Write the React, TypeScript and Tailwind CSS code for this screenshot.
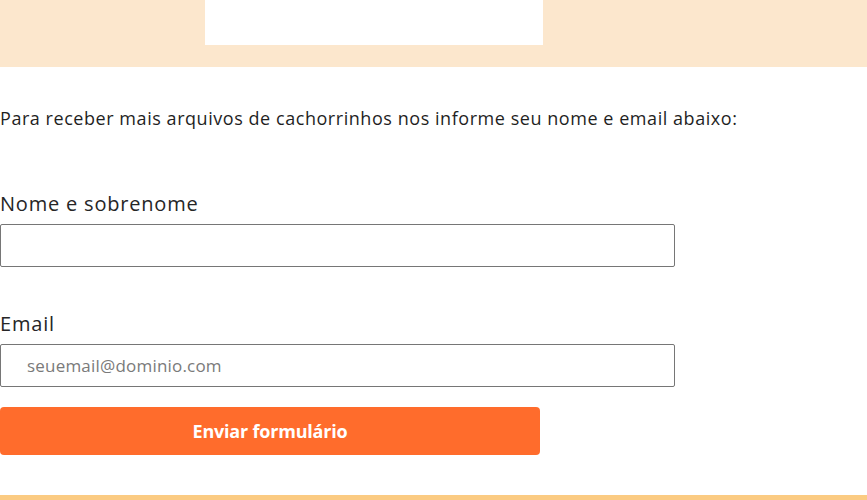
import React from 'react'

const App = () => {
  return (
    <div className="w-[867px] h-[500px] bg-white flex flex-col overflow-hidden" style={{ fontFamily: '"Open Sans", "Noto Sans", sans-serif' }}>
      <header className="h-[67px] bg-[#fce7cd] shrink-0">
        <div className="ml-[205px] w-[338px] h-[45px] bg-white"></div>
      </header>

      <main className="flex-1 flex flex-col">
        <p className="mt-[38px] text-[18px] leading-[26px] tracking-[0.55px] text-[#1f1f1f]">
          Para receber mais arquivos de cachorrinhos nos informe seu nome e email abaixo:
        </p>

        <form className="mt-[59px] flex flex-col">
          <label className="text-[20px] leading-[28px] tracking-[0.8px] text-[#262626]">Nome e sobrenome</label>
          <input
            type="text"
            className="mt-[6px] w-[675px] h-[43px] border border-[#767676] rounded-[2px] px-[26px] text-[17px] outline-none"
          />

          <label className="mt-[43px] text-[20px] leading-[28px] tracking-[0.8px] text-[#262626]">Email</label>
          <input
            type="email"
            placeholder="seuemail@dominio.com"
            className="mt-[6px] w-[675px] h-[43px] border border-[#767676] rounded-[2px] px-[26px] text-[17px] tracking-[0.2px] outline-none placeholder:text-[#7a7a7a]"
          />

          <button
            type="button"
            className="mt-[20px] w-[540px] h-[48px] bg-[#ff6c2c] rounded-[4px] text-white text-[18px] font-bold tracking-[-0.2px]"
          >
            Enviar formulário
          </button>
        </form>
      </main>

      <footer className="h-[5px] bg-[#fbcb82] shrink-0"></footer>
    </div>
  )
}

export default App
